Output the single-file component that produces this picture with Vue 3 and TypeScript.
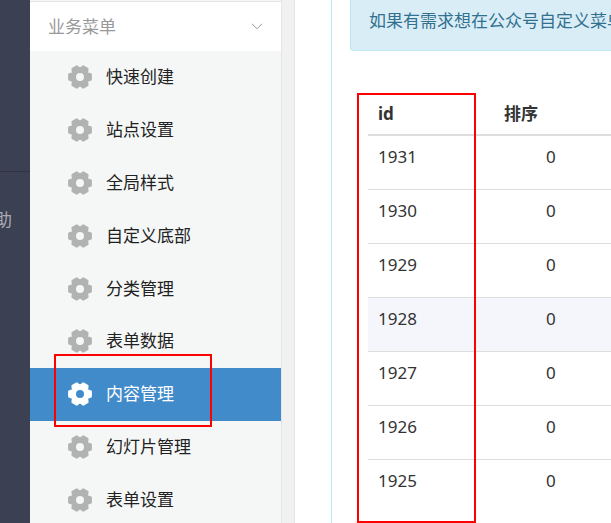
<script setup lang="ts">
interface MenuItem {
  label: string
  active?: boolean
}

interface Row {
  id: number
  sort: number
  hovered?: boolean
}

const menu: MenuItem[] = [
  { label: '快速创建' },
  { label: '站点设置' },
  { label: '全局样式' },
  { label: '自定义底部' },
  { label: '分类管理' },
  { label: '表单数据' },
  { label: '内容管理', active: true },
  { label: '幻灯片管理' },
  { label: '表单设置' },
]

const rows: Row[] = [
  { id: 1931, sort: 0 },
  { id: 1930, sort: 0 },
  { id: 1929, sort: 0 },
  { id: 1928, sort: 0, hovered: true },
  { id: 1927, sort: 0 },
  { id: 1926, sort: 0 },
  { id: 1925, sort: 0 },
]
</script>

<template>
  <div class="page">
    <nav class="rail">
      <a class="rail-link" href="#">助</a>
    </nav>

    <aside class="sidebar">
      <button class="group" type="button">
        <span>业务菜单</span>
        <svg class="chevron" viewBox="0 0 12 7" aria-hidden="true">
          <path d="M1 0.8 6 5.8 11 0.8" />
        </svg>
      </button>
      <ul class="menu">
        <li v-for="item in menu" :key="item.label" class="menu-item">
          <a class="menu-link" :class="{ active: item.active }" href="#">
            <svg class="gear" viewBox="0 0 24 24" aria-hidden="true">
              <path
                fill-rule="evenodd"
                d="M22.9 9.5V14.5L19.1 16.1L19.6 20.2L15.3 22.7L12 20.2L8.7 22.7L4.4 20.2L4.9 16.1L1.1 14.5V9.5L4.9 7.9L4.4 3.8L8.7 1.3L12 3.8L15.3 1.3L19.6 3.8L19.1 7.9ZM12 7a5 5 0 1 0 0 10a5 5 0 0 0 0-10Z"
              />
            </svg>
            <span>{{ item.label }}</span>
          </a>
        </li>
      </ul>
      <div class="mark mark-menu"></div>
    </aside>

    <div class="gutter"></div>

    <main class="main">
      <section class="panel">
        <div class="notice">如果有需求想在公众号自定义菜单</div>
        <div class="list">
          <table class="table">
            <thead>
              <tr>
                <th class="col-id" scope="col">id</th>
                <th scope="col">排序</th>
              </tr>
            </thead>
            <tbody>
              <tr v-for="row in rows" :key="row.id" :class="{ hovered: row.hovered }">
                <td>{{ row.id }}</td>
                <td class="sort">{{ row.sort }}</td>
              </tr>
            </tbody>
          </table>
          <div class="mark mark-column"></div>
        </div>
      </section>
    </main>
  </div>
</template>

<style>
body {
  margin: 0;
  overflow: hidden;
}
</style>

<style scoped>
.page {
  display: flex;
  height: 100vh;
  overflow: hidden;
  background: #fff;
  color: #333;
  font-family: "Noto Sans", "Noto Sans CJK SC", sans-serif;
  font-size: 17px;
  line-height: 24px;
}

.page * {
  box-sizing: border-box;
}

a {
  color: inherit;
  text-decoration: none;
}

.rail {
  flex: 0 0 30px;
  overflow: hidden;
  padding-top: 171px;
  background: #3c4053;
}

.rail-link {
  display: flex;
  justify-content: flex-end;
  padding: 36px 18px 0 0;
  border-top: 1px solid #2f3344;
  color: #a9abb3;
}

.sidebar {
  position: relative;
  flex: 0 0 252px;
  padding-top: 1px;
  border-right: 1px solid #e5e5e5;
  background: #f5f7f7;
}

.group {
  display: flex;
  align-items: center;
  justify-content: space-between;
  width: 100%;
  height: 50px;
  padding: 0 18px;
  border: 0;
  border-top: 1px solid #e5e5e5;
  background: #fff;
  color: #999;
  font: inherit;
}

.chevron {
  width: 12px;
  height: 7px;
  fill: none;
  stroke: #999;
}

.menu {
  display: flex;
  flex-direction: column;
  height: 475px;
  margin: 0;
  padding: 0;
  list-style: none;
}

.menu-item {
  flex: 1;
}

.menu-link {
  display: flex;
  align-items: center;
  gap: 14px;
  height: 100%;
  padding-left: 38px;
  color: #222;
}

.menu-link.active {
  background: #428bca;
  box-shadow: 0 1px 0 #428bca;
  color: #fff;
}

.gear {
  width: 24px;
  height: 24px;
  fill: #b2b2b2;
  stroke: #b2b2b2;
  stroke-width: 2px;
  stroke-linejoin: round;
}

.active .gear {
  fill: #fff;
  stroke: #fff;
}

.gutter {
  flex: 0 0 13px;
  border-right: 1px solid #e5e5e5;
  background: #f1f1f1;
}

.main {
  flex: 1;
  min-width: 0;
  padding-left: 36px;
}

.panel {
  height: 100%;
  padding-left: 18px;
  border-left: 1px solid #bce8f1;
}

.notice {
  padding: 9px 0 17px 18px;
  overflow: hidden;
  border: 1px solid #bce8f1;
  border-width: 0 0 1px 1px;
  border-bottom-left-radius: 4px;
  background: #d9edf7;
  color: #31708f;
  white-space: nowrap;
}

.list {
  position: relative;
  padding: 42px 0 0 18px;
}

.table {
  width: 100%;
  border-collapse: separate;
  border-spacing: 0;
}

th,
td {
  padding: 9px 10px;
  text-align: left;
  vertical-align: top;
}

th {
  padding-bottom: 8px;
  border-bottom: 2px solid #ddd;
}

td {
  height: 54px;
  border-bottom: 1px solid #ddd;
}

tr:last-child td {
  border-bottom: 0;
}

.col-id {
  width: 126px;
}

.sort {
  padding-left: 52px;
}

.hovered td {
  background: #f5f6fb;
}

.mark {
  position: absolute;
  border: 2px solid #f00;
  pointer-events: none;
}

.mark-menu {
  top: 354px;
  left: 24px;
  width: 158px;
  height: 73px;
}

.mark-column {
  top: 42px;
  bottom: -9px;
  left: 7px;
  width: 119px;
}
</style>
